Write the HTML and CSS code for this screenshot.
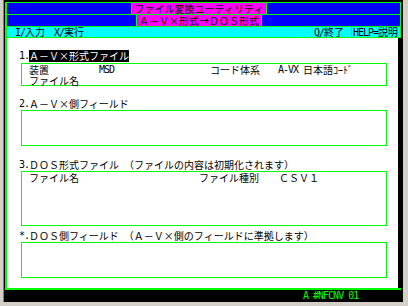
FILE: index.html
```html
<!DOCTYPE html>
<html lang="ja">
<head>
<meta charset="utf-8">
<title>ファイル変換ユーティリティ</title>
<link rel="stylesheet" href="styles.css">
</head>
<body>
<div class="window">
  <div class="frame">
    <div class="header">
      <div class="row">
        <div class="blue b1"></div>
        <div class="mag m1">ファイル変換ユーティリティ</div>
        <div class="blue fill"></div>
      </div>
      <div class="row">
        <div class="blue b2"></div>
        <div class="mag m2">Ａ－Ｖ×形式→ＤＯＳ形式</div>
        <div class="blue fill"></div>
      </div>
      <div class="row row-keys">
        <div class="keys">
          <span><span class="hw">I/</span>入力<span class="hw sp">X/</span>実行</span>
          <span><span class="hw">Q/</span>終了</span>
        </div>
        <div class="help"><span class="hw">HELP=</span>説明</div>
      </div>
    </div>
    <div class="body">
      <div class="title t1"><span class="hw num">1.</span><span class="hl">Ａ－Ｖ×形式ファイル</span></div>
      <div class="box box1">
        <div class="line"><span class="c1">装置</span><span class="c2 hw">MSD</span><span class="c3">コード体系</span><span class="c4 hw">A-VX</span><span>日本語ｺｰﾄﾞ</span></div>
        <div class="line"><span>ファイル名</span></div>
      </div>
      <div class="title t2"><span class="hw num">2.</span><span>Ａ－Ｖ×側フィールド</span></div>
      <div class="box box2"></div>
      <div class="title t3"><span class="hw num">3.</span><span>ＤＯＳ形式ファイル</span><span class="hw">&nbsp;</span><span>（ファイルの内容は初期化されます）</span></div>
      <div class="box box3">
        <div class="line"><span class="d1">ファイル名</span><span class="d2">ファイル種別</span><span>ＣＳＶ１</span></div>
      </div>
      <div class="title t4"><span class="hw num">*.</span><span>ＤＯＳ側フィールド</span><span class="hw">&nbsp;</span><span>（Ａ－Ｖ×側のフィールドに準拠します）</span></div>
      <div class="box box4"></div>
    </div>
  </div>
  <div class="status hw">A #NFCNV 01</div>
</div>
</body>
</html>
```

FILE: styles.css
```css
html, body {
  margin: 0;
  padding: 0;
}

body {
  background: #d4d0c8;
  width: 408px;
  height: 306px;
  overflow: hidden;
  font-family: "Noto Sans CJK JP", sans-serif;
  font-size: 10px;
  color: #000;
}

.window {
  margin-left: 3px;
  width: 400px;
  height: 302px;
  box-sizing: border-box;
  border-left: 1px solid #808080;
  padding: 2px 2px 0 1px;
  background: #000;
  display: flex;
  flex-direction: column;
}

.frame {
  border-left: 2px solid #00ff00;
  border-bottom: 2px solid #00ff00;
  display: flex;
  flex-direction: column;
}

.header {
  background: #00ff00;
  padding: 1px 1px 1px 0;
  display: flex;
  flex-direction: column;
  gap: 1px;
}

.row {
  display: flex;
  gap: 1px;
  height: 11px;
  line-height: 11px;
}

.row-keys {
  height: 10px;
  line-height: 10px;
}

.blue {
  background: #0000ff;
}

.b1 { width: 124px; }
.b2 { width: 129px; }

.fill {
  flex: 1;
}

.mag {
  background: #ff00ff;
  text-align: center;
  white-space: nowrap;
}

.m1 { width: 134px; }
.m2 { width: 124px; }

.keys {
  flex: 1;
  background: #00ffff;
  display: flex;
  justify-content: space-between;
  padding: 0 7px 0 8px;
  white-space: nowrap;
}

.help {
  width: 47px;
  background: #00ffff;
  padding-left: 1px;
  white-space: nowrap;
}

.hw {
  font-family: "DejaVu Sans Mono", monospace;
  letter-spacing: -1px;
}

.sp {
  margin-left: 9px;
}

.body {
  background: #fff;
  height: 250px;
  margin-right: 3px;
  display: flex;
  flex-direction: column;
  align-items: flex-start;
}

.title {
  height: 12px;
  line-height: 12px;
  padding-left: 12px;
  display: flex;
  white-space: nowrap;
}

.num {
  width: 10px;
}

.hl {
  background: #000;
  color: #fff;
}

.t1 { margin-top: 12px; }
.t2 { margin-top: 12px; }
.t3 { margin-top: 13px; }
.t4 { margin-top: 4px; }

.box {
  margin-left: 14px;
  width: 366px;
  box-sizing: border-box;
  border: 1px solid #00ff00;
  padding-left: 7px;
}

.box1 { margin-top: 1px; height: 23px; }
.box2 { height: 36px; }
.box3 { height: 55px; }
.box4 { height: 36px; }

.line {
  display: flex;
  height: 11px;
  line-height: 11px;
  white-space: nowrap;
}

.c1 { width: 70px; }
.c2 { width: 111px; }
.c3 { width: 68px; }
.c4 { width: 25px; }

.d1 { width: 170px; }
.d2 { width: 80px; }

.status {
  height: 12px;
  line-height: 12px;
  color: #00ff00;
  padding-left: 298px;
  white-space: nowrap;
}
```
